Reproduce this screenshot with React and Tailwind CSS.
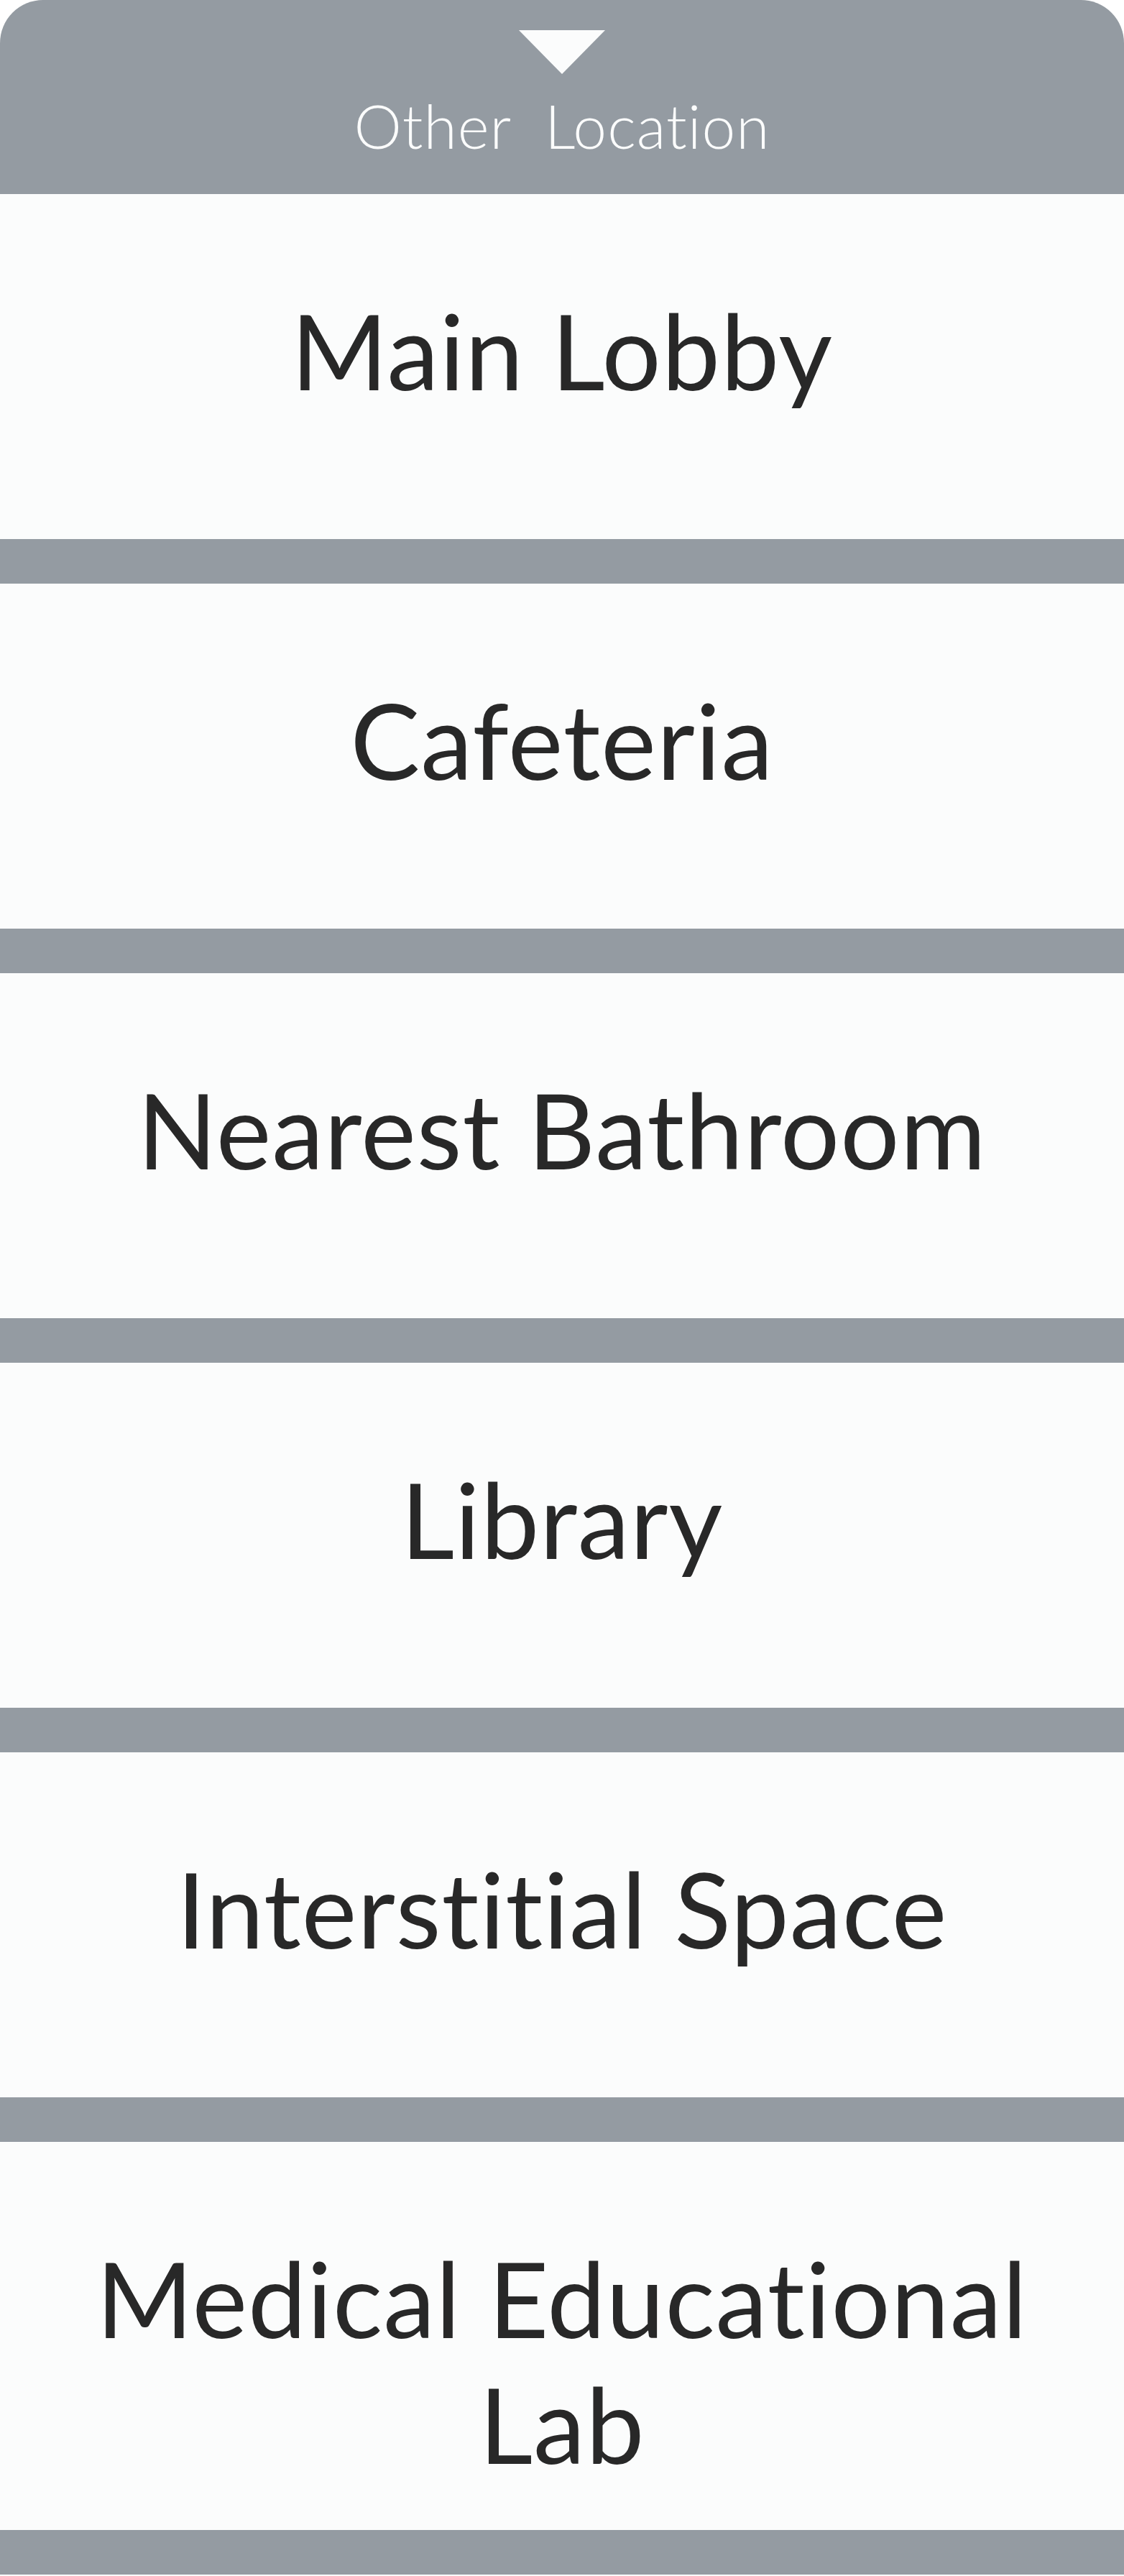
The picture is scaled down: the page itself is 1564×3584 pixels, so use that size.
import React from 'react';

const locations = [
  'Main Lobby',
  'Cafeteria',
  'Nearest Bathroom',
  'Library',
  'Interstitial Space',
  'Medical Educational Lab',
];

const App = () => {
  return (
    <div className="w-[1564px] min-h-[3584px] bg-white font-['Lato','Liberation_Sans',sans-serif] [font-variant-ligatures:none]">
      {/* header */}
      <div className="h-[270px] bg-[#949ba2] rounded-t-[60px] flex flex-col items-center pt-[42px]">
        <svg width="120" height="61" viewBox="0 0 120 61" className="block">
          <polygon points="0,0 120,0 60,61" fill="#fbfcfc" />
        </svg>
        <div className="mt-[22px] text-[84px] leading-[100px] font-light text-[#fbfcfc] tracking-[1px] whitespace-pre">
          Other  Location
        </div>
      </div>

      {/* list */}
      <div className="flex flex-col">
        {locations.map((name) => (
          <button
            key={name}
            className="min-h-[542px] pt-[130px] pb-[60px] px-[40px] flex flex-col items-center justify-start bg-[#fbfcfc] border-b-[62px] border-[#949ba2] text-[145px] leading-[175px] tracking-[1px] text-[#282828] text-center"
          >
            {name}
          </button>
        ))}
      </div>
    </div>
  );
};

export default App;
